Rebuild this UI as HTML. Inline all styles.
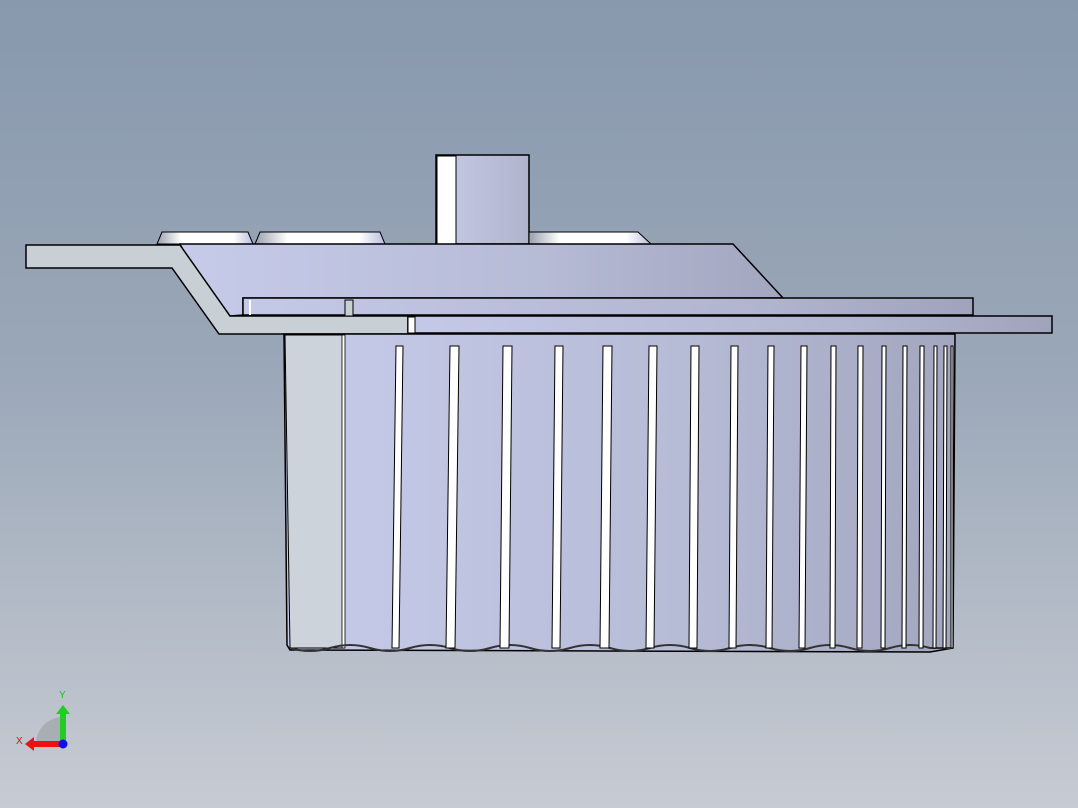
<!DOCTYPE html>
<html><head><meta charset="utf-8"><style>
html,body{margin:0;padding:0;width:1078px;height:808px;overflow:hidden}
body{background:linear-gradient(#8898ad,#9aa7b8 45%,#c7cbd3)}
svg{position:absolute;left:0;top:0}
</style></head><body>
<svg width="1078" height="808" viewBox="0 0 1078 808">
<defs>
<linearGradient id="lav" x1="0" x2="1"><stop offset="0" stop-color="#c6cbea"/><stop offset="0.6" stop-color="#b6bbd6"/><stop offset="1" stop-color="#a2a6be"/></linearGradient>
<linearGradient id="lav2" x1="0" x2="1"><stop offset="0" stop-color="#c4c9e8"/><stop offset="0.7" stop-color="#b1b5cf"/><stop offset="1" stop-color="#9fa3bb"/></linearGradient>
<linearGradient id="cup" x1="0" x2="1"><stop offset="0" stop-color="#9aa0b0"/><stop offset="0.25" stop-color="#fff"/><stop offset="0.8" stop-color="#fff"/><stop offset="1" stop-color="#b8bde0"/></linearGradient>
<linearGradient id="boss" x1="0" x2="1"><stop offset="0" stop-color="#c6cbe6"/><stop offset="1" stop-color="#b0b4cc"/></linearGradient>
</defs>
<!-- boss -->
<rect x="436" y="155" width="93" height="89" fill="url(#boss)" stroke="#000" stroke-width="1.5"/>
<rect x="437" y="156" width="19" height="88" fill="#fff" stroke="#000" stroke-width="1"/>
<!-- cups -->
<polygon points="162,232 248,232 253,244 157,244" fill="url(#cup)" stroke="#000" stroke-width="1"/>
<polygon points="260,232 380,232 385,244 255,244" fill="url(#cup)" stroke="#000" stroke-width="1"/>
<polygon points="529,232 638,232 651,244 529,244" fill="url(#cup)" stroke="#000" stroke-width="1"/>
<!-- upper body -->
<polygon points="180,244 733,244 783,298 243,298 243,315 230,316 183,250" fill="url(#lav)" stroke="#000" stroke-width="1.5"/>
<!-- left flange grey -->
<polygon points="26,245 180,245 230,316 408,316 408,334 219,334 172,268 26,268" fill="#c8d0d6" stroke="#000" stroke-width="1.5"/>
<!-- plate 1 -->
<rect x="243" y="298" width="730" height="17" fill="url(#lav2)" stroke="#000" stroke-width="1.5"/>
<rect x="249" y="300" width="2" height="15" fill="#fff"/>
<rect x="345" y="300" width="8" height="16" fill="#c8d0d6" stroke="#000" stroke-width="1"/>
<!-- plate 2 -->
<rect x="408" y="316" width="644" height="17" fill="url(#lav2)" stroke="#000" stroke-width="1.5"/>
<rect x="408" y="317" width="7" height="16" fill="#fff" stroke="#000" stroke-width="1"/>
<!-- cylinder -->
<polygon points="284,334 955,334 953,648 930,652 290,650 287,645" fill="url(#lav)" stroke="#000" stroke-width="1.5"/>
<polygon points="285,335 343,335 343,648 290,648" fill="#ccd3da" stroke="#000" stroke-width="1"/>
<rect x="342" y="335" width="3" height="313" fill="#fff" stroke="#000" stroke-width="0.8"/>
<path d="M290,648 Q310,654 330,648 T370,648 T410,648 T450,648 T490,648 T530,648 T570,648 T610,648 T650,648 T690,648 T730,648 T770,648 T810,648 T850,648 T890,648 T930,648 L953,648" fill="none" stroke="#333" stroke-width="2"/>
<g fill="#fff" stroke="#000" stroke-width="1">
<polygon points="396,346 403,346 399,648 392,648"/>
<polygon points="450,346 459,346 455,648 446,648"/>
<polygon points="503,346 512,346 509,648 500,648"/>
<polygon points="555,346 563,346 560,648 552,648"/>
<polygon points="603,346 612,346 609,648 600,648"/>
<polygon points="649,346 657,346 654,648 646,648"/>
<polygon points="691,346 699,346 697,648 689,648"/>
<polygon points="731,346 738,346 736,648 729,648"/>
<polygon points="768,346 774,346 772,648 766,648"/>
<polygon points="801,346 807,346 805,648 799,648"/>
<polygon points="831,346 836,346 835,648 830,648"/>
<polygon points="858,346 863,346 862,648 857,648"/>
<polygon points="882,346 886,346 885,648 881,648"/>
<polygon points="903,346 907,346 906,648 902,648"/>
<polygon points="920,346 924,346 923,648 919,648"/>
<polygon points="934,346 937,346 936,648 933,648"/>
<polygon points="944,346 947,346 946,648 943,648"/>
<polygon points="951,346 953,346 953,648 951,648"/>
</g>
<!-- axis triad -->
<path d="M36,744 A27,27 0 0 1 63,717 L63,744 Z" fill="#a9adb4"/>
<rect x="60" y="712" width="6" height="32" fill="#22cc22"/>
<polygon points="56,714 63,705 70,714" fill="#22cc22"/>
<rect x="32" y="741" width="30" height="6" fill="#ee1111"/>
<polygon points="34,737 25,744 34,751" fill="#ee1111"/>
<circle cx="63" cy="744" r="4.5" fill="#1010ee"/>
<text x="59" y="698" font-family="Liberation Sans, sans-serif" font-size="10" fill="#22bb22">Y</text>
<text x="16" y="744" font-family="Liberation Sans, sans-serif" font-size="10" fill="#dd1111">X</text>
</svg>
</body></html>
